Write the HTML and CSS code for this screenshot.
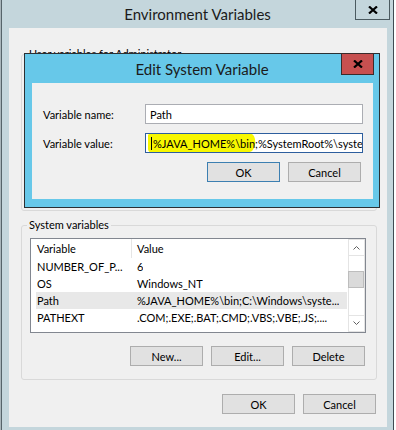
FILE: index.html
```html
<!DOCTYPE html>
<html>
<head>
<meta charset="utf-8">
<link rel="stylesheet" href="styles.css">
</head>
<body>
<div class="screen">
  <div class="edge"></div>
  <div class="window">
    <div class="titlebar">
      <span class="title">Environment Variables</span>
      <div class="close close-outer">
        <svg width="10" height="8" viewBox="0 0 10 8"><path d="M1 0.5 L9 7.5 M9 0.5 L1 7.5" stroke="#000" stroke-width="2.2" fill="none"/></svg>
      </div>
    </div>
    <div class="client">
      <fieldset class="group group-user">
        <legend>User variables for Administrator</legend>
      </fieldset>
      <fieldset class="group group-system">
        <legend>System variables</legend>
        <div class="listview">
          <div class="lv-main">
            <div class="lv-header">
              <div class="h1">Variable</div>
              <div class="h2">Value</div>
            </div>
            <div class="lv-row"><span class="c1">NUMBER_OF_P...</span><span class="c2">6</span></div>
            <div class="lv-row"><span class="c1">OS</span><span class="c2">Windows_NT</span></div>
            <div class="lv-row selected"><span class="c1">Path</span><span class="c2">%JAVA_HOME%\bin;C:\Windows\syste...</span></div>
            <div class="lv-row"><span class="c1">PATHEXT</span><span class="c2">.COM;.EXE;.BAT;.CMD;.VBS;.VBE;.JS;....</span></div>
          </div>
          <div class="scrollbar">
            <div class="sb-btn"><svg width="7" height="5" viewBox="0 0 7 5"><polyline points="0.5,4.5 3.5,1.5 6.5,4.5" stroke="#606060" fill="none"/></svg></div>
            <div class="sb-track"><div class="sb-thumb"></div></div>
            <div class="sb-btn"><svg width="7" height="5" viewBox="0 0 7 5"><polyline points="0.5,0.5 3.5,3.5 6.5,0.5" stroke="#606060" fill="none"/></svg></div>
          </div>
        </div>
        <div class="btnrow group-btns">
          <div class="btn">New...</div>
          <div class="btn">Edit...</div>
          <div class="btn">Delete</div>
        </div>
      </fieldset>
      <div class="btnrow main-btns">
        <div class="btn">OK</div>
        <div class="btn">Cancel</div>
      </div>

      <div class="dialog">
        <div class="dlg-title">
          <span class="title">Edit System Variable</span>
          <div class="close dlg-close">
            <svg width="10" height="8" viewBox="0 0 10 8"><path d="M1 0.5 L9 7.5 M9 0.5 L1 7.5" stroke="#000" stroke-width="2.2" fill="none"/></svg>
          </div>
        </div>
        <div class="dlg-body">
          <div class="field">
            <span class="label">Variable name:</span>
            <div class="input"><span class="txt">Path</span></div>
          </div>
          <div class="field">
            <span class="label">Variable value:</span>
            <div class="input focused">
              <svg class="marker" width="110" height="20" viewBox="0 0 110 20"><path d="M0 2 Q1 0 6 0.5 L100 0 Q106 0 107 6 Q108 14 104 18 Q101 20 96 19 L3 19.5 Q0 19 0 16 Z" fill="#f7f700"/></svg>
              <span class="caret"></span><span class="txt">%JAVA_HOME%\bin;%SystemRoot%\system32;%SystemRoot%</span>
            </div>
          </div>
          <div class="btnrow dlg-btns">
            <div class="btn default">OK</div>
            <div class="btn">Cancel</div>
          </div>
        </div>
      </div>
    </div>
  </div>
</div>
</body>
</html>
```

FILE: styles.css
```css
* { box-sizing: border-box; }
html, body { margin: 0; padding: 0; }
body {
  width: 396px;
  height: 430px;
  overflow: hidden;
  background: #ffffff;
  font-family: Lato, "Noto Sans", sans-serif;
  font-size: 11px;
  color: #000;
}
.screen { display: flex; height: 430px; }
.edge {
  width: 2px;
  background: linear-gradient(to right, #a9b6bb 0 1px, #56646a 1px 2px);
}
.window {
  width: 392px;
  height: 430px;
  background: #c4d6dc;
  border-right: 1px solid #3f4c52;
  display: flex;
  flex-direction: column;
}
.titlebar {
  height: 28px;
  position: relative;
  display: flex;
  justify-content: center;
  align-items: center;
  flex: none;
}
.title { font-size: 15px; color: #1b1b1b; }
.close {
  position: absolute;
  display: flex;
  align-items: center;
  justify-content: center;
}
.close-outer {
  left: 353px;
  top: -1px;
  width: 35px;
  height: 21px;
  border: 1px solid #4b5a60;
  background: #c4d6dc;
}
.client {
  position: relative;
  margin-left: 7px;
  width: 378px;
  height: 399px;
  background: #f0f0f0;
  padding: 19px 10px 0 12px;
}
.group {
  margin: 0;
  min-width: 0;
  border: 1px solid #d9d9d9;
  border-radius: 3px;
  padding: 5px 10px 13px 8px;
}
.group legend {
  padding: 0 2px;
  margin-left: -3px;
  line-height: 14px;
}
.group-user { height: 164px; }
.group-system { margin-top: 7px; padding-top: 6px; }

.listview {
  width: 336px;
  height: 95px;
  border: 1px solid #828790;
  background: #fff;
  display: flex;
}
.lv-main { width: 317px; overflow: hidden; }
.lv-header { display: flex; height: 19px; align-items: center; }
.lv-header .h1 { width: 101px; height: 19px; line-height: 19px; padding-left: 6px; border-right: 1px solid #e5e5e5; }
.lv-header .h2 { padding-left: 5px; }
.lv-row {
  display: flex;
  height: 17px;
  line-height: 17px;
  margin: 0 1px 0 5px;
  white-space: nowrap;
}
.lv-row .c1 { width: 95px; padding-left: 1px; flex: none; }
.lv-row .c2 { padding-left: 6px; overflow: hidden; }
.lv-row.selected { background: #e8e8e8; }

.scrollbar {
  width: 17px;
  display: flex;
  flex-direction: column;
  background: #fff;
}
.sb-btn {
  height: 17px;
  border: 1px solid #e4e4e4;
  display: flex;
  align-items: center;
  justify-content: center;
  flex: none;
}
.sb-track { flex: 1; border-left: 1px solid #e4e4e4; border-right: 1px solid #e4e4e4; }
.sb-thumb {
  margin-top: 15px;
  margin-left: -1px;
  width: 16px;
  height: 17px;
  background: #dadada;
  border: 1px solid #bdbdbd;
}

.btnrow { display: flex; justify-content: flex-end; gap: 8px; }
.btn {
  width: 73px;
  height: 20px;
  background: #e1e1e1;
  border: 1px solid #adadad;
  display: flex;
  align-items: center;
  justify-content: center;
}
.btn.default { border-color: #3c7fb1; }
.group-btns { margin-top: 13px; padding-right: 1px; }
.main-btns { margin-top: 14px; padding-right: 1px; }

.dialog {
  position: absolute;
  left: 15px;
  top: 25px;
  width: 356px;
  height: 155px;
  background: #67c8e9;
  border: 1px solid #2b3033;
  display: flex;
  flex-direction: column;
}
.dlg-title {
  height: 29px;
  position: relative;
  display: flex;
  justify-content: center;
  align-items: center;
  flex: none;
}
.dlg-close {
  left: 316px;
  top: -1px;
  width: 33px;
  height: 22px;
  background: #c75050;
  border: 1px solid #3b2b2b;
}
.dlg-body {
  flex: 1;
  margin: 0 6px 8px 7px;
  background: #f0f0f0;
  padding: 21px 10px 0 11px;
}
.field { display: flex; align-items: center; height: 20px; margin-bottom: 9px; }
.label { width: 102px; flex: none; }
.input {
  position: relative;
  width: 218px;
  height: 20px;
  border: 1px solid #abadb3;
  background: #fff;
  display: flex;
  align-items: center;
  padding-left: 4px;
  overflow: hidden;
  white-space: nowrap;
}
.input.focused { border-color: #2d5e9e; padding-left: 5px; }
.input .txt { position: relative; }
.marker { position: absolute; left: 2px; top: -1px; }
.caret { position: relative; width: 1px; height: 13px; background: #000; margin-right: 1px; flex: none; }
.dlg-btns { margin-top: 4px; padding-right: 2px; }
```
